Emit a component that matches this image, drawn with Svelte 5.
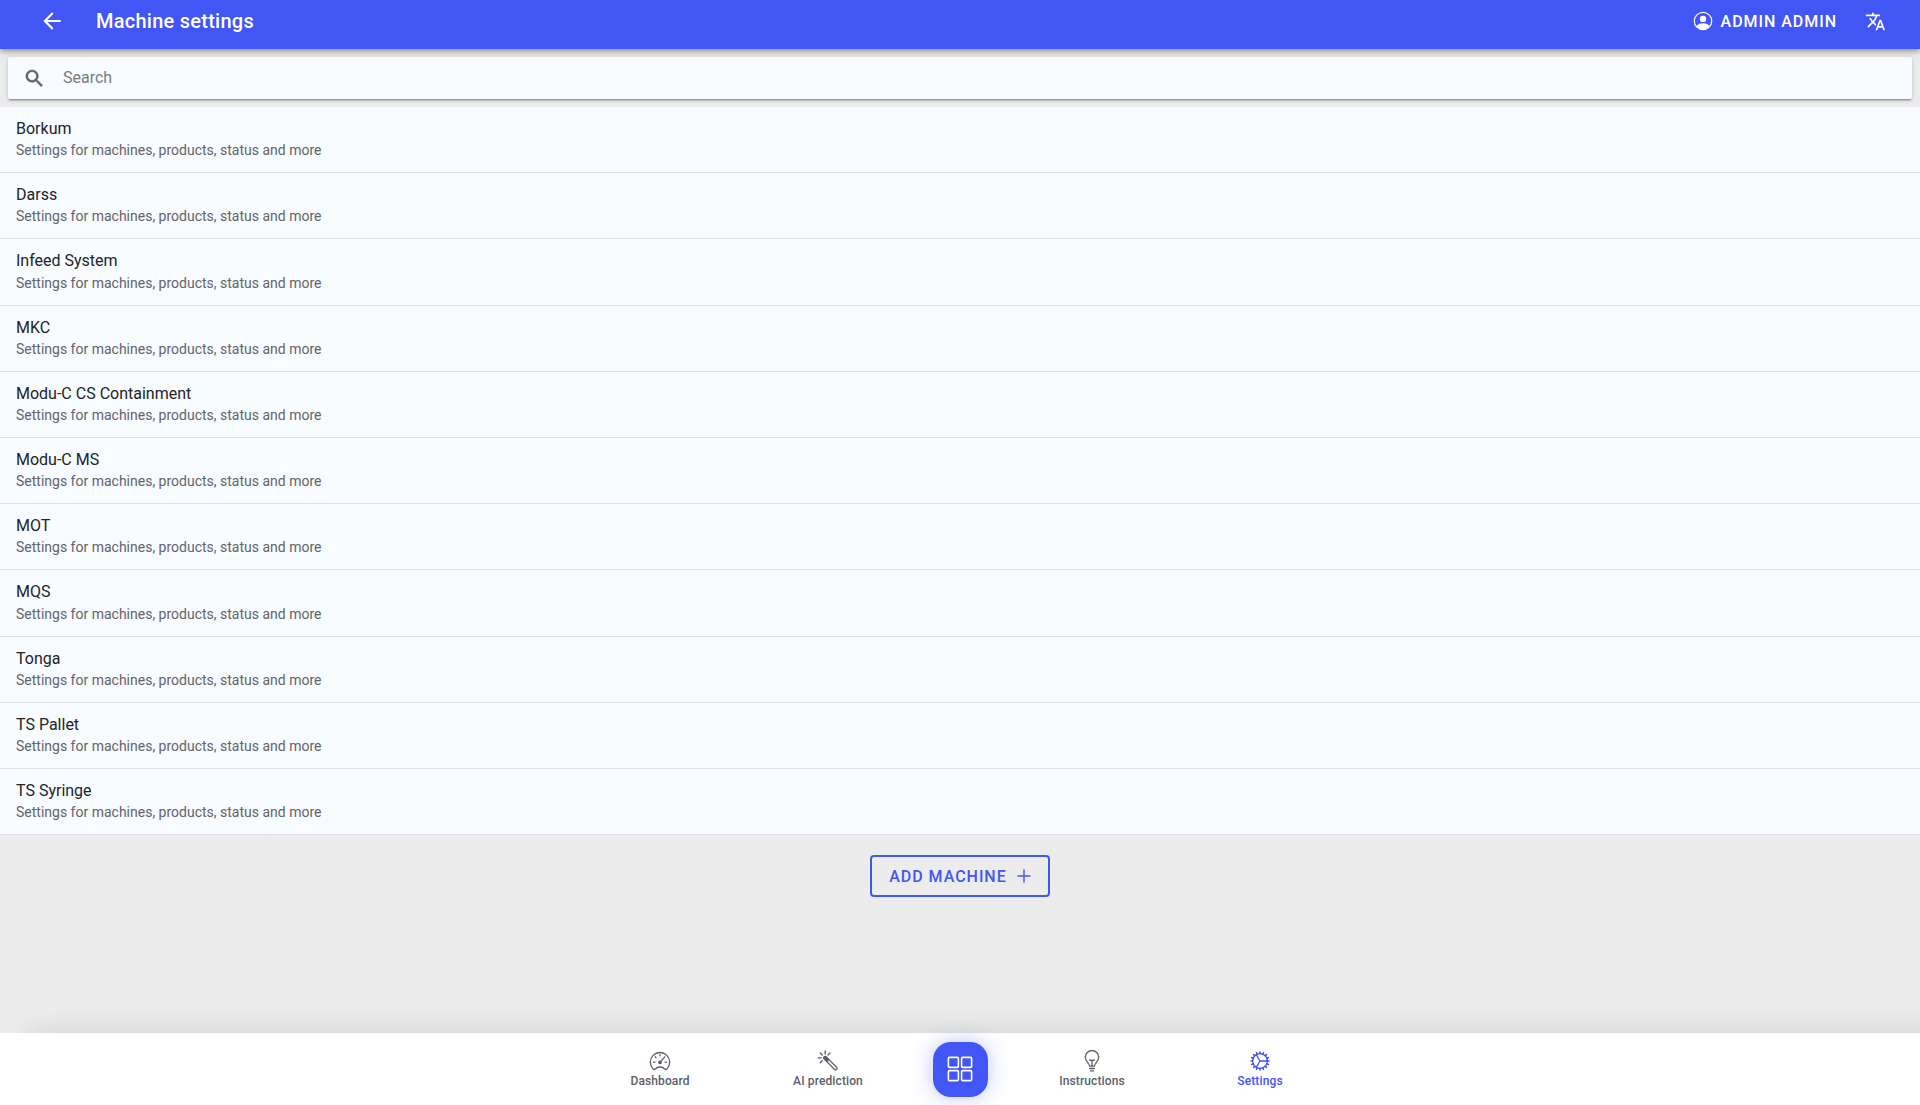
<script>
	let query = $state('');
	let activeTab = $state('Settings');

	const machines = [
		'Borkum', 'Darss', 'Infeed System', 'MKC', 'Modu-C CS Containment', 'Modu-C MS',
		'MOT', 'MQS', 'Tonga', 'TS Pallet', 'TS Syringe',
	];

	let visible = $derived(machines.filter((m) => m.toLowerCase().includes(query.trim().toLowerCase())));

	// angles of the teeth on the settings cog
	const teeth = Array.from({ length: 16 }, (_, i) => i * 22.5);
</script>

{#snippet tab(name, icon)}
	<button class="tab" class:active={activeTab === name} onclick={() => activeTab = name}>
		{@render icon()}
		<span>{name}</span>
	</button>
{/snippet}

{#snippet gauge()}
	<svg viewBox="0 0 22 22">
		<path d="M4.3 19.2A9.7 9.7 0 1 1 17.7 19.2Q17 19.8 16.2 19.2Q13.8 17 11 17T5.8 19.2Q5 19.8 4.3 19.2Z" />
		<path d="M11 4.6v1.2M6.3 6.8l.7.7M4.4 12.2h1.6M16 12.2h1.6M11.4 11.8l4.3-5" />
		<circle cx="11" cy="12.4" r="1.2" class="solid" />
	</svg>
{/snippet}

{#snippet wand()}
	<svg viewBox="0 0 22 22">
		<path d="M7.2 8.9a1.4 1.4 0 0 1 2-2L19.6 17.3a1.4 1.4 0 0 1-2 2.2Z" />
		<path d="M7.2 8.9a1.4 1.4 0 0 1 2-2l2.6 2.6-2 2Z" class="solid" />
		<path d="M8.2 1v3M3.3 3l2 2M1.2 7.9h2.9M3.2 12.8l2-2M13 3l-2 2" />
	</svg>
{/snippet}

{#snippet bulb()}
	<svg viewBox="0 0 22 22">
		<path d="M8.6 16.2c0-3.2-4.3-4.4-4.3-9C4.3 3.3 7.4.6 11 .6s6.7 2.7 6.7 6.6c0 4.6-4.3 5.8-4.3 9Z" />
		<path d="M8.5 9.9q2.5 1.1 5 0M11 10.4V16M8.6 18.5h4.8M9.4 20.9h3.2" />
	</svg>
{/snippet}

{#snippet cog()}
	<svg viewBox="0 0 22 22">
		<circle cx="11" cy="11" r="7.4" />
		{#each teeth as angle}
			<path d="M11 3.6V2" transform="rotate({angle} 11 11)" stroke-width="1.6" />
		{/each}
		<path d="M11 11h7.3M11 11L7.3 4.6M11 11l-3.7 6.4" />
	</svg>
{/snippet}

<div class="page">
	<header>
		<button class="icon-btn back" aria-label="Back">
			<svg viewBox="0 0 24 24"><path d="M20 11H7.83l5.59-5.59L12 4l-8 8 8 8 1.41-1.41L7.83 13H20v-2z" /></svg>
		</button>
		<h1>Machine settings</h1>
		<button class="user">
			<svg viewBox="0 0 20 20">
				<circle cx="10" cy="10" r="8.7" fill="none" stroke="currentColor" stroke-width="1.2" />
				<circle cx="10" cy="7.9" r="3.2" />
				<path d="M3.6 15.2C5 12.9 7.5 12.3 10 12.3s5 .6 6.4 2.9A8.2 8.2 0 0 1 3.6 15.2Z" />
			</svg>
			Admin Admin
		</button>
		<button class="icon-btn" aria-label="Language">
			<svg viewBox="0 0 24 24"><path d="M12.87 15.07l-2.54-2.51.03-.03c1.74-1.94 2.98-4.17 3.71-6.53H17V4h-7V2H8v2H1v1.99h11.17C11.5 7.92 10.44 9.75 9 11.35 8.07 10.32 7.3 9.19 6.69 8h-2c.73 1.63 1.73 3.17 2.98 4.56l-5.09 5.02L4 19l5-5 3.11 3.11.76-2.04zM18.5 10h-2L12 22h2l1.12-3h4.75L21 22h2l-4.5-12zm-2.62 7l1.62-4.33L19.12 17h-3.24z" /></svg>
		</button>
	</header>

	<main>
		<label class="search">
			<svg viewBox="0 0 24 24"><path d="M15.5 14h-.79l-.28-.27C15.41 12.59 16 11.11 16 9.5 16 5.91 13.09 3 9.5 3S3 5.91 3 9.5 5.91 16 9.5 16c1.61 0 3.09-.59 4.23-1.57l.27.28v.79l5 4.99L20.49 19l-4.99-5zm-6 0C7.01 14 5 11.99 5 9.5S7.01 5 9.5 5 14 7.01 14 9.5 11.99 14 9.5 14z" /></svg>
			<input type="search" placeholder="Search" aria-label="Search" bind:value={query} />
		</label>

		<ul>
			{#each visible as name}
				<li>
					<h2>{name}</h2>
					<p>Settings for machines, products, status and more</p>
				</li>
			{/each}
		</ul>

		<button class="add">
			Add machine
			<svg viewBox="0 0 18 18"><path d="M9 2.5v13M2.5 9h13" /></svg>
		</button>
	</main>

	<nav>
		{@render tab('Dashboard', gauge)}
		{@render tab('AI prediction', wand)}
		<div class="center">
			<button class="fab" aria-label="Menu">
				<svg viewBox="0 0 26 26">
					<rect x="1.4" y="1.4" width="10" height="10" rx="1" />
					<rect x="14.6" y="1.4" width="10" height="10" rx="1" />
					<rect x="1.4" y="14.6" width="10" height="10" rx="1" />
					<rect x="14.6" y="14.6" width="10" height="10" rx="1" />
				</svg>
			</button>
		</div>
		{@render tab('Instructions', bulb)}
		{@render tab('Settings', cog)}
	</nav>
</div>

<style>
	:global(body) { background: #ececec; font-family: Roboto, sans-serif; }
	button { border: none; background: none; color: inherit; font-family: inherit; cursor: pointer; padding: 0; }
	.page { display: flex; flex-direction: column; min-height: 100vh; }

	header { position: relative; z-index: 1; display: flex; align-items: center; padding: 0 34px 7px 39px; height: 42px; background: #4255f5; color: #fff; box-shadow: 0 2px 4px -1px rgba(0, 0, 0, 0.2), 0 4px 5px 0 rgba(0, 0, 0, 0.14), 0 1px 10px 0 rgba(0, 0, 0, 0.12); }
	header svg { fill: currentColor; display: block; }
	h1 { flex: 1; margin: 0; font-size: 20px; font-weight: 500; letter-spacing: 0.0125em; }
	.icon-btn svg { width: 21px; height: 21px; }
	.back { margin-right: 31px; }
	.back svg { width: 26px; height: 26px; }
	.user { display: flex; align-items: center; gap: 8px; margin-right: 28px; font-size: 16px; font-weight: 500; letter-spacing: 0.06em; text-transform: uppercase; }
	.user svg { width: 20px; height: 20px; }

	main { flex: 1; display: flex; flex-direction: column; }
	.search { display: flex; align-items: center; gap: 17px; margin: 8px; padding: 0 15px; height: 42px; border-radius: 2px; background: #f8fbff; box-shadow: 0 2px 2px 0 rgba(0, 0, 0, 0.14), 0 3px 1px -2px rgba(0, 0, 0, 0.2), 0 1px 5px 0 rgba(0, 0, 0, 0.12); }
	.search svg { width: 23px; height: 23px; fill: #5e5e5e; stroke: #5e5e5e; stroke-width: 0.4; }
	.search input { flex: 1; height: 40px; border: none; outline: none; background: none; padding: 0 0 2px; font-family: inherit; font-size: 16px; color: #222428; }
	.search input::placeholder { color: #7a7c80; }

	ul { list-style: none; margin: 0; padding: 0; }
	li { padding: 12px 16px; border-bottom: 1px solid #dcdfe6; background: #f8fbff; }
	h2 { margin: 0 0 2px; font-size: 16px; font-weight: 400; line-height: 1.2; color: #222428; }
	li p { margin: 0; font-size: 14px; line-height: 20px; color: #636469; }

	.add { align-self: center; display: flex; align-items: center; gap: 8px; height: 42px; margin: 20px 0; padding: 0 15px 0 17px; border: 2px solid #4255f5; border-radius: 4px; color: #4255f5; font-size: 16px; font-weight: 500; letter-spacing: 0.06em; text-transform: uppercase; }
	.add svg { width: 18px; height: 18px; fill: none; stroke: currentColor; stroke-width: 1.4; }

	nav { display: flex; justify-content: center; height: 72px; background: #fff; box-shadow: 28px 0 28px rgba(0, 0, 0, 0.12); }
	.tab { flex: 0 1 168px; display: flex; flex-direction: column; align-items: center; justify-content: center; gap: 2px; color: #5b5e6d; font-size: 12px; line-height: 14px; font-weight: 500; letter-spacing: 0.01em; }
	.tab.active { color: #4255f5; }
	.tab svg { width: 22px; height: 22px; fill: none; stroke: currentColor; stroke-width: 1.3; stroke-linecap: round; stroke-linejoin: round; }
	.tab .solid { fill: currentColor; }
	.center { width: 96px; display: flex; align-items: center; justify-content: center; }
	.fab { display: flex; align-items: center; justify-content: center; width: 55px; height: 55px; border-radius: 18px; background: #4255f5; color: #fff; box-shadow: 0 0 20px rgba(66, 85, 245, 0.35); }
	.fab svg { width: 26px; height: 26px; fill: none; stroke: currentColor; stroke-width: 1.6; }
</style>
